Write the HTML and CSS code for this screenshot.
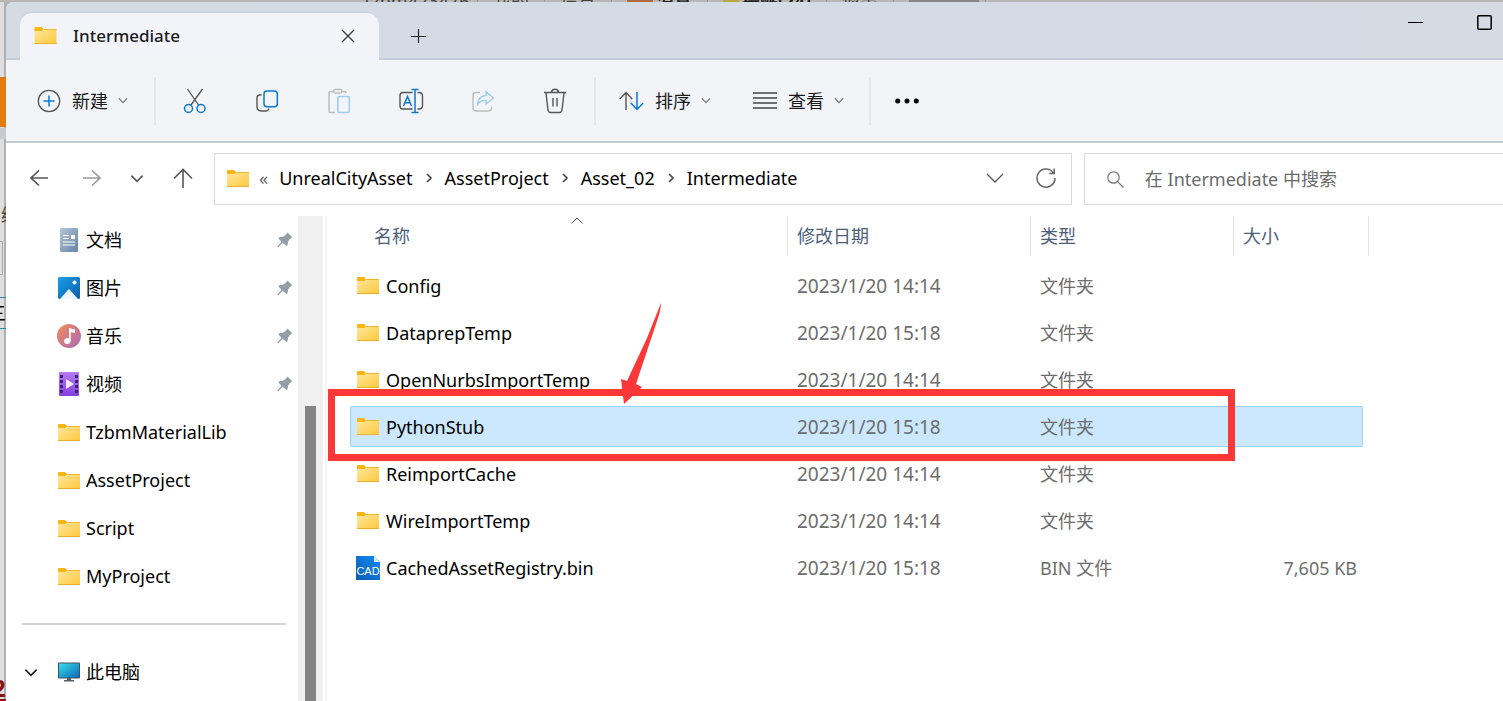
FILE: index.html
```html
<!DOCTYPE html>
<html lang="zh-CN">
<head>
<meta charset="utf-8">
<title>Intermediate</title>
<link rel="stylesheet" href="styles.css">
</head>
<body>
<svg class="defs" width="0" height="0" aria-hidden="true">
  <defs>
    <linearGradient id="gFolder" x1="0" y1="0" x2="1" y2="1"><stop offset="0" stop-color="#ffe7a0"/><stop offset="1" stop-color="#fdc93a"/></linearGradient>
    <linearGradient id="gDoc" x1="0" y1="0" x2="1" y2="1"><stop offset="0" stop-color="#b4c5d9"/><stop offset="1" stop-color="#6684a6"/></linearGradient>
    <linearGradient id="gPic" x1="0" y1="0" x2="1" y2="1"><stop offset="0" stop-color="#1a9fe6"/><stop offset="1" stop-color="#0a5fae"/></linearGradient>
    <linearGradient id="gMusic" x1="0" y1="0" x2="1" y2="1"><stop offset="0" stop-color="#f58b55"/><stop offset="1" stop-color="#a969b8"/></linearGradient>
    <linearGradient id="gVideo" x1="0" y1="0" x2="0" y2="1"><stop offset="0" stop-color="#b57cf3"/><stop offset="1" stop-color="#8440de"/></linearGradient>
    <linearGradient id="gPc" x1="0" y1="0" x2="1" y2="1"><stop offset="0" stop-color="#36dfe6"/><stop offset="1" stop-color="#0b68bd"/></linearGradient>
    <linearGradient id="gCad" x1="1" y1="0" x2="0" y2="1"><stop offset="0" stop-color="#178af2"/><stop offset="1" stop-color="#0a5bb4"/></linearGradient>
    <symbol id="folder" viewBox="0 0 22 17"><path d="M0 4V1Q0 0 1 0H7L9 2V4Z" fill="#f9b512"/><path d="M0 4H7.5L9.5 2H21.5L22 2.5V17H0Z" fill="url(#gFolder)"/><path d="M9.5 2.5H22" stroke="#f3b52b"/><path d="M0 16.5H22" stroke="#eeb02c"/></symbol>
    <symbol id="pin" viewBox="0 0 16 16"><path d="M10.5 0.5L15.5 5.5L13.7 6.3L11 9.6L10.6 13L9.4 14L5.6 10.7L1.2 15.4L.3 14.7L4.4 9.7L1.3 6.2L2.5 5.2L6.1 4.8L9 2.5Z" fill="#949ea6"/></symbol>
    <symbol id="down" viewBox="0 0 12 8"><path d="M1 1.5L6 6.5L11 1.5" fill="none" stroke="currentColor" stroke-width="1.5"/></symbol>
    <symbol id="right" viewBox="0 0 8 10"><path d="M2 1L6 5L2 9" fill="none" stroke="currentColor" stroke-width="1.6"/></symbol>
  </defs>
</svg>
<div class="desktop">
  <div class="page-top" aria-hidden="true">
    <span class="user">Tzbm423476</span><i></i><span>我的</span><i></i><span>设置</span><i></i><b class="mail"></b><strong>消息</strong><i></i><b class="bell"></b><strong>提醒(24)</strong><i></i><span>退出</span><i></i><b class="field"></b><i></i>
  </div>
  <div class="page-left" aria-hidden="true">
    <span class="orange"></span><span class="band"></span><span class="glyph">绘</span><span class="box"></span><span class="lines">三</span><span class="red">2</span>
  </div>

  <main class="window">
    <header class="titlebar">
      <div class="tab">
        <svg width="23" height="17"><use href="#folder"/></svg>
        <span class="tab-title">Intermediate</span>
        <button class="tab-close" aria-label="关闭标签页"><svg width="14" height="14" viewBox="0 0 14 14"><path d="M1 1L13 13M13 1L1 13" fill="none" stroke="#333" stroke-width="1.2"/></svg></button>
      </div>
      <button class="new-tab" aria-label="新标签页"><svg width="16" height="16" viewBox="0 0 16 16"><path d="M8.5 1V15M1 8.5H16" stroke="#222" stroke-width="1.2"/></svg></button>
      <div class="captions">
        <button aria-label="最小化"><svg width="15" height="15" viewBox="0 0 15 15"><path d="M0 7.5H15" stroke="#000"/></svg></button>
        <button aria-label="最大化"><svg width="15" height="15" viewBox="0 0 15 15"><rect x=".8" y=".8" width="13.4" height="13.4" rx="1" fill="none" stroke="#000" stroke-width="1.5"/></svg></button>
      </div>
    </header>

    <nav class="toolbar" aria-label="命令">
      <button class="cmd new"><svg width="24" height="24" viewBox="0 0 24 24"><circle cx="12" cy="12" r="10.7" fill="none" stroke="#555" stroke-width="1.3"/><path d="M12 6.5V17.5M6.5 12H17.5" stroke="#0a78d4" stroke-width="1.5"/></svg><span>新建</span><svg class="chev" width="10" height="7"><use href="#down"/></svg></button>
      <span class="sep"></span>
      <div class="icons">
        <button aria-label="剪切"><svg width="24" height="26" viewBox="0 0 24 26"><path d="M4.5 1L15.5 17M19.5 1L8 17" fill="none" stroke="#555" stroke-width="1.3"/><circle cx="5.5" cy="20.5" r="4" fill="none" stroke="#0a78d4" stroke-width="1.5"/><circle cx="18" cy="20.5" r="4" fill="none" stroke="#0a78d4" stroke-width="1.5"/></svg></button>
        <button aria-label="复制"><svg width="24" height="26" viewBox="0 0 24 26"><path d="M6.5 7H4.5Q2 7 2 10V18.5Q2 23 6.5 23H10.5Q13.5 23 13.8 20.5" fill="none" stroke="#555" stroke-width="1.4"/><rect x="9" y="3" width="13.3" height="15.8" rx="3" fill="none" stroke="#0a78d4" stroke-width="1.5"/></svg></button>
        <button aria-label="粘贴" disabled><svg width="24" height="26" viewBox="0 0 24 26"><path d="M6 3.5H3.5Q2 3.5 2 5V23Q2 24.5 3.5 24.5H8M15.5 3.5H17.5Q19 3.5 19 5" fill="none" stroke="#bcbcbc" stroke-width="1.5"/><rect x="6.5" y="1.5" width="8.5" height="3.5" rx="1.7" fill="none" stroke="#bcbcbc" stroke-width="1.4"/><rect x="10.8" y="8.5" width="11.5" height="16" rx="1.5" fill="none" stroke="#9fcdf0" stroke-width="1.6"/></svg></button>
        <button aria-label="重命名"><svg width="26" height="26" viewBox="0 0 26 26"><path d="M14.5 4.5H5Q2 4.5 2 7.5V18Q2 21 5 21H14.5M19.5 4.5H21Q24.5 4.5 24.5 8V17.5Q24.5 21 21 21H19.5" fill="none" stroke="#555" stroke-width="1.4"/><path d="M5.5 18L9.5 8.5L13.5 18M7 14.8H12M17 2V24M13.5 1.5H20.5M13.5 24.5H20.5" fill="none" stroke="#0a78d4" stroke-width="1.5"/></svg></button>
        <button aria-label="共享" disabled><svg width="24" height="26" viewBox="0 0 24 26"><path d="M9 4.5H5Q2 4.5 2 7.5V19.5Q2 23 5.5 23H17Q20.5 23 20.5 20V18.5" fill="none" stroke="#bcbcbc" stroke-width="1.4"/><path d="M15 7.5V3.5L22.5 10L15 16V12.5Q9 12 6.5 17Q7 8 15 7.5Z" fill="none" stroke="#9fcdf0" stroke-width="1.4" stroke-linejoin="round"/></svg></button>
        <button aria-label="删除"><svg width="24" height="26" viewBox="0 0 24 26"><path d="M1 4.5H23M8.5 4Q9 1.3 12 1.3T15.5 4M3 5L5 22Q5.4 24.5 7.5 24.5H16.5Q18.6 24.5 19 22L21 5M10 10V18.5M14 10V18.5" fill="none" stroke="#555" stroke-width="1.4"/></svg></button>
      </div>
      <span class="sep"></span>
      <button class="cmd sort"><svg width="25" height="20" viewBox="0 0 25 20"><path d="M7 19V1.5M.8 8L7 1.5L13.2 8" fill="none" stroke="#555" stroke-width="1.4"/><path d="M18 1V18.5M11.8 12L18 18.5L24.2 12" fill="none" stroke="#0a78d4" stroke-width="1.5"/></svg><span>排序</span><svg class="chev" width="10" height="7"><use href="#down"/></svg></button>
      <button class="cmd view"><svg width="24" height="17" viewBox="0 0 24 17"><path d="M0 1H24M0 6H24M0 11H24M0 16H24" stroke="#444" stroke-width="1.3"/></svg><span>查看</span><svg class="chev" width="10" height="7"><use href="#down"/></svg></button>
      <span class="sep"></span>
      <button class="more" aria-label="更多"><svg width="24" height="6" viewBox="0 0 24 6"><circle cx="2.7" cy="3" r="2.5"/><circle cx="12" cy="3" r="2.5"/><circle cx="21.3" cy="3" r="2.5"/></svg></button>
    </nav>

    <div class="navbar">
      <div class="history">
        <button aria-label="后退"><svg width="18" height="18" viewBox="0 0 18 18"><path d="M18 9H1M9 1.5L1 9L9 16.5" fill="none" stroke="#555" stroke-width="1.6"/></svg></button>
        <button aria-label="前进" disabled><svg width="18" height="18" viewBox="0 0 18 18"><path d="M0 9H17M9 1.5L17 9L9 16.5" fill="none" stroke="#999" stroke-width="1.6"/></svg></button>
        <button aria-label="最近"><svg width="14" height="9"><use href="#down"/></svg></button>
        <button aria-label="向上"><svg width="20" height="20" viewBox="0 0 20 20"><path d="M10 20V1.5M1 10.5L10 1.5L19 10.5" fill="none" stroke="#555" stroke-width="1.6"/></svg></button>
      </div>
      <div class="address">
        <svg width="22" height="17"><use href="#folder"/></svg>
        <span class="laquo">«</span>
        <a href="#">UnrealCityAsset</a><svg class="crumb" width="8" height="10"><use href="#right"/></svg>
        <a href="#">AssetProject</a><svg class="crumb" width="8" height="10"><use href="#right"/></svg>
        <a href="#">Asset_02</a><svg class="crumb" width="8" height="10"><use href="#right"/></svg>
        <a href="#">Intermediate</a>
        <button class="drop" aria-label="以前的位置"><svg width="18" height="10" viewBox="0 0 18 10"><path d="M1 1L9 9L17 1" fill="none" stroke="#555" stroke-width="1.3"/></svg></button>
        <button class="refresh" aria-label="刷新"><svg width="20" height="20" viewBox="0 0 20 20"><path d="M19 10A9 9 0 1 1 17.2 4.7M18.2 .5V5.5H13.2" fill="none" stroke="#666" stroke-width="1.5"/></svg></button>
      </div>
      <label class="search"><svg width="17" height="17" viewBox="0 0 17 17"><circle cx="6.5" cy="6.5" r="5.7" fill="none" stroke="#777" stroke-width="1.2"/><path d="M10.6 10.6L16.5 16.5" stroke="#777" stroke-width="1.2"/></svg><input type="text" placeholder="在 Intermediate 中搜索" aria-label="搜索"></label>
    </div>

    <div class="body">
      <aside class="side">
        <ul>
          <li><svg class="ico" width="24" height="24" viewBox="0 0 24 24"><rect x="3" width="18" height="24" rx="1.5" fill="url(#gDoc)"/><path d="M6 7.5H12M6 10.5H12M6 14H18M6 17H18" stroke="#fff" stroke-width="1.2"/><rect x="14" y="7" width="4" height="4" fill="#fff"/></svg><a href="#">文档</a><svg class="pin" width="16" height="16"><use href="#pin"/></svg></li>
          <li><svg class="ico" width="24" height="24" viewBox="0 0 24 24"><rect x="1" y="1" width="22" height="22" rx="1.5" fill="url(#gPic)"/><path d="M3 23L11 14Q12 12.5 13 14L21 23Z" fill="#edf7ff"/><circle cx="17.5" cy="6.5" r="2" fill="#fff"/></svg><a href="#">图片</a><svg class="pin" width="16" height="16"><use href="#pin"/></svg></li>
          <li><svg class="ico" width="24" height="24" viewBox="0 0 24 24"><circle cx="12" cy="12" r="12" fill="url(#gMusic)"/><path d="M12 4L18 5.5V9L13.7 8V17A3.3 3 0 1 1 12 14.5Z" fill="#fff"/></svg><a href="#">音乐</a><svg class="pin" width="16" height="16"><use href="#pin"/></svg></li>
          <li><svg class="ico" width="24" height="24" viewBox="0 0 24 24"><rect x="2" width="20" height="24" rx="1" fill="url(#gVideo)"/><path d="M4.5 3V22M19.5 3V22" stroke="#43207c" stroke-width="3" stroke-dasharray="3 2"/><path d="M9 7L17 12L9 17Z" fill="#f2eaff"/></svg><a href="#">视频</a><svg class="pin" width="16" height="16"><use href="#pin"/></svg></li>
          <li><svg class="ico" width="24" height="17"><use href="#folder"/></svg><a href="#">TzbmMaterialLib</a></li>
          <li><svg class="ico" width="24" height="17"><use href="#folder"/></svg><a href="#">AssetProject</a></li>
          <li><svg class="ico" width="24" height="17"><use href="#folder"/></svg><a href="#">Script</a></li>
          <li><svg class="ico" width="24" height="17"><use href="#folder"/></svg><a href="#">MyProject</a></li>
        </ul>
        <hr>
        <div class="pc"><button aria-label="折叠"><svg width="14" height="9"><use href="#down"/></svg></button><svg class="ico" width="24" height="20" viewBox="0 0 24 20"><rect x="1" y=".5" width="22" height="16" rx="1" fill="#45505a"/><rect x="2" y="1.5" width="20" height="14" fill="url(#gPc)"/><path d="M10 16H14V18H17V19.5H7V18H10Z" fill="#54606a"/></svg><a href="#">此电脑</a></div>
      </aside>
      <div class="scroll"><span></span></div>
      <section class="files">
        <table>
          <colgroup><col class="c1"><col class="c2"><col class="c3"><col class="c4"><col class="c5"></colgroup>
          <thead><tr><th>名称<svg class="asc" width="12" height="7" viewBox="0 0 12 7"><path d="M.5 6.5L6 1L11.5 6.5" fill="none" stroke="#555"/></svg></th><th>修改日期</th><th>类型</th><th colspan="2">大小</th></tr></thead>
          <tbody>
            <tr><td><div class="name"><svg width="24" height="17"><use href="#folder"/></svg>Config</div></td><td class="date">2023/1/20 14:14</td><td>文件夹</td><td class="size"></td></tr>
            <tr><td><div class="name"><svg width="24" height="17"><use href="#folder"/></svg>DataprepTemp</div></td><td class="date">2023/1/20 15:18</td><td>文件夹</td><td class="size"></td></tr>
            <tr><td><div class="name"><svg width="24" height="17"><use href="#folder"/></svg>OpenNurbsImportTemp</div></td><td class="date">2023/1/20 14:14</td><td>文件夹</td><td class="size"></td></tr>
            <tr class="selected"><td><div class="name"><svg width="24" height="17"><use href="#folder"/></svg>PythonStub</div></td><td class="date">2023/1/20 15:18</td><td>文件夹</td><td class="size"></td></tr>
            <tr><td><div class="name"><svg width="24" height="17"><use href="#folder"/></svg>ReimportCache</div></td><td class="date">2023/1/20 14:14</td><td>文件夹</td><td class="size"></td></tr>
            <tr><td><div class="name"><svg width="24" height="17"><use href="#folder"/></svg>WireImportTemp</div></td><td class="date">2023/1/20 14:14</td><td>文件夹</td><td class="size"></td></tr>
            <tr><td><div class="name"><svg width="24" height="24" viewBox="0 0 24 24"><path d="M0 0H18L24 6V24H0Z" fill="url(#gCad)"/><path d="M18 0L24 6H18Z" fill="#d7ebff"/><text class="cad" x="12" y="19" text-anchor="middle">CAD</text></svg>CachedAssetRegistry.bin</div></td><td class="date">2023/1/20 15:18</td><td>BIN 文件</td><td class="size">7,605 KB</td></tr>
          </tbody>
        </table>
        <div class="callout"></div>
        <svg class="arrow" width="42" height="104" viewBox="0 0 42 104"><path d="M41 1Q41 7 38 16L16 82L22 85L4 102L1 77L7 79L27 36Z" fill="#fb3737"/></svg>
      </section>
    </div>
  </main>
</div>
</body>
</html>
```
FILE: styles.css
```css
* { box-sizing: border-box; }
body {
  margin: 0;
  font: 18px/24px "Noto Sans", "Noto Sans CJK SC", sans-serif;
  color: #000;
  overflow: hidden;
}
button { border: 0; padding: 0; background: none; font: inherit; color: inherit; display: flex; align-items: center; justify-content: center; }
a { color: inherit; text-decoration: none; }
svg { display: block; flex: none; }
.defs { position: absolute; }

.desktop {
  display: grid;
  grid-template: 2px 1fr / 6px 1fr;
  height: 100vh;
  background: #b5b5b5;
}
.page-top {
  grid-column: 1 / 3;
  display: flex;
  align-items: center;
  gap: 12px;
  padding-left: 362px;
  overflow: hidden;
  color: #444;
  background: #b8b7b5;
}
.page-top i { width: 1px; height: 24px; margin: 0 3px; background: #999; }
.page-top strong { color: #222; }
.page-top b { width: 26px; height: 24px; margin-right: -9px; background: #b26a43; }
.page-top .bell { width: 16px; background: #b8a83e; }
.page-top .field { width: 70px; background: #858585; }
.user { width: 100px; }
.page-left {
  position: relative;
  overflow: hidden;
  background: linear-gradient(90deg, #dedede 0 4px, #b0b0b0 4px);
}
.page-left span { position: absolute; left: 0; width: 6px; }
.page-left .orange { top: 75px; height: 50px; background: #e47b10; }
.page-left .band { top: 126px; height: 11px; background: #c5cbd1; }
.page-left .glyph { top: 201px; left: 1px; color: #554838; }
.page-left .box { top: 239px; height: 34px; width: 3px; border: solid #aaa; border-width: 1px 1px 1px 0; }
.page-left .lines { top: 295px; height: 32px; line-height: 30px; border: solid #2689a8; border-width: 1px 0; text-indent: -12px; }
.page-left .red { top: 674px; color: #8a0f0f; font-size: 24px; font-weight: 700; text-indent: -8px; text-decoration: underline; }

.window {
  display: flex;
  flex-direction: column;
  min-width: 0;
  min-height: 0;
  border-radius: 8px 0 0 0;
  background: #fff;
  overflow: hidden;
}
.titlebar {
  display: flex;
  align-items: center;
  height: 58px;
  flex: none;
  padding-left: 14px;
  background: linear-gradient(#c5ced8, #c5ced8) bottom / 100% 2px no-repeat, linear-gradient(90deg, #d3dbe3, #d4dbe6 70%, #d4dbe2);
}
.tab {
  display: flex;
  align-items: center;
  align-self: flex-end;
  width: 359px;
  height: 47px;
  padding: 0 24px 2px 14px;
  border-radius: 12px 12px 0 0;
  background: #f3f4f9;
  box-shadow: 0 -1px 1px #c5cfdb;
}
.tab-title { margin-left: 16px; font-size: 17px; font-weight: 500; color: #1b1b1b; }
.tab-close { margin-left: auto; }
.new-tab { margin: 10px 0 0 31px; }
.captions { display: flex; gap: 54px; margin: 0 11px 0 auto; align-self: flex-start; padding-top: 13px; }

.toolbar {
  display: flex;
  align-items: center;
  height: 83px;
  flex: none;
  padding-left: 31px;
  background: #f3f4f8;
  border-bottom: 2px solid #c3cbd5;
  color: #1b1b1b;
}
.cmd { gap: 11px; }
.cmd .chev { margin-left: -1px; color: #777; }
.sep { width: 2px; height: 48px; background: #e4e6ea; }
.new + .sep { margin-left: 26px; }
.icons { display: flex; gap: 48px; margin: 0 27px; }
.icons button { width: 24px; }
.sort { margin-left: 23px; }
.view { margin-left: 42px; }
.view + .sep { margin-left: 25px; }
.more { margin-left: 24px; }

.navbar { display: flex; height: 73px; flex: none; padding-top: 10px; }
.history { display: flex; align-items: center; width: 208px; height: 52px; padding: 0 0 2px 24px; gap: 35px; color: #555; }
.history button:nth-child(3) { margin: 0 -6px; }
.address {
  display: flex;
  align-items: center;
  flex: 1;
  height: 52px;
  padding: 0 15px 2px 12px;
  border: 1px solid #d9d9d9;
}
.laquo { margin: 0 11px 0 10px; color: #666; }
.crumb { margin: 0 12px; color: #444; }
.drop { margin-left: auto; }
.refresh { margin-left: 32px; }
.search {
  display: flex;
  align-items: center;
  flex: 0 0 28%;
  height: 52px;
  margin-left: 12px;
  padding-left: 22px;
  border: 1px solid #d9d9d9;
  border-right: 0;
}
.search input { flex: 1; min-width: 0; margin-left: 21px; padding: 0; border: 0; outline: 0; background: none; font: inherit; }
.search input::placeholder { color: #6b6b6b; opacity: 1; }

.body { display: flex; flex: 1; min-height: 0; }
.side { width: 292px; flex: none; }
.side ul { margin: 0; padding: 0; list-style: none; }
.side li { display: flex; align-items: center; height: 48px; padding: 0 5px 0 51px; }
.side .ico { margin-right: 5px; }
.pin { margin-left: auto; }
.side hr { height: 2px; margin: 23px 12px 23px 16px; border: 0; background: #d4d4d4; }
.pc { display: flex; align-items: center; height: 48px; padding-left: 18px; }
.pc button { margin-right: 19px; color: #222; }
.scroll { width: 25px; flex: none; padding: 190px 7px 0; background: #f0f0f0; }
.scroll span { display: block; height: 100%; background: #858585; }

.files { position: relative; flex: 1; margin-left: 2px; padding-left: 23px; border-left: 2px solid #f5f5f5; }
table { width: 1019px; margin-top: -6px; table-layout: fixed; border-collapse: separate; border-spacing: 0 6px; }
.c1 { width: 438px; }
.c2 { width: 243px; }
.c3 { width: 203px; }
.c4 { width: 129px; }
.c5 { width: 6px; }
th {
  position: relative;
  height: 43px;
  padding: 0 0 3px 9px;
  text-align: left;
  font-weight: 400;
  color: #4c607a;
  background: linear-gradient(#e2e2e2, #e2e2e2) right top / 1px 40px no-repeat;
}
th:first-child { padding-left: 24px; }
.asc { position: absolute; left: 221px; top: 1px; }
td { height: 41px; padding: 0 0 0 9px; color: #6d6d6d; border: solid transparent; border-width: 1px 0; }
td:first-child { color: #000; padding-left: 5px; border-left-width: 1px; }
.name { display: flex; align-items: center; gap: 6px; }
.date { font-size: 19px; }
.size { text-align: right; padding-right: 5px; border-right-width: 1px; }
.selected td { background: #cce8ff; border-color: #99d1ff; }
.selected td:first-child { border-radius: 2px 0 0 2px; }
.selected .size { border-radius: 0 2px 2px 0; }
.cad { font: 11px "Liberation Sans", sans-serif; fill: #fff; }
.callout { position: absolute; left: 1px; top: 173px; width: 907px; height: 72px; border: 7px solid #fb3737; }
.arrow { position: absolute; left: 293px; top: 86px; }
```
